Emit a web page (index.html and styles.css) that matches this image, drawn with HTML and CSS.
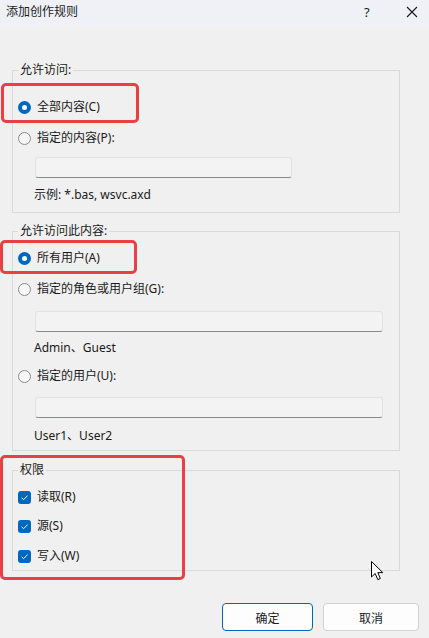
FILE: index.html
```html
<!DOCTYPE html>
<html lang="zh-CN">
<head>
<meta charset="utf-8">
<title>添加创作规则</title>
<link rel="stylesheet" href="styles.css">
</head>
<body>
<div class="window">
  <div class="titlebar">
    <span class="title">添加创作规则</span>
    <span class="help">?</span>
    <span class="close">
      <svg width="12" height="12" viewBox="0 0 12 12"><path d="M1 1 L11 11 M11 1 L1 11" stroke="#1a1a1a" stroke-width="1.1" fill="none"/></svg>
    </span>
  </div>

  <div class="content">
    <fieldset class="group g1">
      <legend>允许访问:</legend>
      <div class="opt"><span class="radio on"></span><span>全部内容(C)</span></div>
      <div class="opt gap7"><span class="radio"></span><span>指定的内容(P):</span></div>
      <div class="field short mt7"></div>
      <div class="hint mt9">示例: *.bas, wsvc.axd</div>
    </fieldset>

    <fieldset class="group g2">
      <legend>允许访问此内容:</legend>
      <div class="opt"><span class="radio on"></span><span>所有用户(A)</span></div>
      <div class="opt gap7"><span class="radio"></span><span>指定的角色或用户组(G):</span></div>
      <div class="field long mt10"></div>
      <div class="hint mt8">Admin、Guest</div>
      <div class="opt mt8"><span class="radio"></span><span>指定的用户(U):</span></div>
      <div class="field long mt9"></div>
      <div class="hint mt10">User1、User2</div>
    </fieldset>

    <fieldset class="group g3">
      <legend>权限</legend>
      <div class="opt"><span class="check"><svg width="13" height="13" viewBox="0 0 13 13"><path d="M3.6 6.8 L5.6 8.7 L9.6 4.6" stroke="#ffffff" stroke-width="1" fill="none"/></svg></span><span>读取(R)</span></div>
      <div class="opt mt5"><span class="check"><svg width="13" height="13" viewBox="0 0 13 13"><path d="M3.6 6.8 L5.6 8.7 L9.6 4.6" stroke="#ffffff" stroke-width="1" fill="none"/></svg></span><span>源(S)</span></div>
      <div class="opt mt6"><span class="check"><svg width="13" height="13" viewBox="0 0 13 13"><path d="M3.6 6.8 L5.6 8.7 L9.6 4.6" stroke="#ffffff" stroke-width="1" fill="none"/></svg></span><span>写入(W)</span></div>
    </fieldset>
  </div>

  <div class="buttons">
    <button class="btn primary">确定</button>
    <button class="btn cancel">取消</button>
  </div>

  <div class="mark m1"></div>
  <div class="mark m2"></div>
  <div class="mark m3"></div>

  <svg class="cursor" width="14" height="21" viewBox="0 0 14 21">
    <path d="M0.5 0.5 L0.5 16 L4.2 12.5 L6.8 18.6 L9.3 17.5 L6.8 11.6 L11.8 11.6 Z" fill="#ffffff" stroke="#000000" stroke-width="1" stroke-linejoin="miter"/>
  </svg>
</div>
</body>
</html>
```

FILE: styles.css
```css
* { box-sizing: border-box; }

html, body {
  margin: 0;
  padding: 0;
  background: #f0f0f0;
}

body {
  font-family: "Noto Sans", "Noto Sans CJK SC", sans-serif;
  font-size: 12px;
  line-height: 16px;
  color: #1a1a1a;
}

.window {
  position: relative;
  width: 429px;
  height: 638px;
  background: #f0f0f0;
  overflow: hidden;
}

.titlebar {
  height: 26px;
  background: #eff1f6;
  display: flex;
  align-items: center;
  padding-left: 6px;
}

.title {
  flex: 1;
  font-size: 12px;
  margin-top: -2px;
}

.help {
  width: 10px;
  font-size: 13px;
  margin-right: 32px;
  margin-top: -2px;
}

.close {
  display: flex;
  width: 12px;
  height: 12px;
  margin-right: 11px;
  margin-top: -2px;
}

.content {
  padding: 0 29px 0 12px;
}

.group {
  margin: 0;
  padding: 0;
  border: 1px solid #dadada;
  min-width: 0;
}

.group legend {
  margin-left: 5px;
  padding: 0 2px;
  line-height: 16px;
  height: 16px;
}

.g1 { margin-top: 36px; padding: 17px 0 9px 0; }
.g2 { margin-top: 10px; padding: 7px 0 6px 0; }
.g3 { margin-top: 11px; padding: 7px 0 2px 0; }

.opt {
  display: flex;
  align-items: center;
  gap: 6px;
  height: 24px;
  margin-left: 5px;
}

.gap7 { margin-top: 7px; }
.mt5 { margin-top: 5px; }
.mt6 { margin-top: 6px; }
.mt7 { margin-top: 7px; }
.mt8 { margin-top: 8px; }
.mt9 { margin-top: 9px; }
.mt10 { margin-top: 10px; }

.radio {
  width: 13px;
  height: 13px;
  border-radius: 50%;
  border: 1px solid #8b8b8b;
  background: #f6f6f6;
  flex: none;
  display: flex;
  align-items: center;
  justify-content: center;
}

.radio.on {
  border: none;
  background: #0067c0;
}

.radio.on::after {
  content: "";
  width: 5px;
  height: 5px;
  border-radius: 50%;
  background: #ffffff;
}

.check {
  width: 13px;
  height: 13px;
  border-radius: 3px;
  background: #0067c0;
  flex: none;
  display: flex;
}

.field {
  margin-left: 22px;
  height: 21px;
  background: #f3f3f3;
  border: 1px solid #e2e2e2;
  border-bottom-color: #8a8a8a;
  border-radius: 3px;
}

.field.short { width: 257px; }
.field.long { width: 348px; }

.hint {
  margin-left: 21px;
  height: 16px;
}

.buttons {
  display: flex;
  justify-content: flex-end;
  gap: 10px;
  padding-right: 10px;
  margin-top: 32px;
}

.btn {
  height: 28px;
  font-family: "Noto Sans CJK SC", sans-serif;
  font-size: 12px;
  color: #1a1a1a;
  background: #fdfdfd;
  border-radius: 4px;
  padding: 0;
}

.btn.primary {
  width: 91px;
  border: 1px solid #0067c0;
}

.btn.cancel {
  width: 96px;
  border: 1px solid #d1d1d1;
}

.mark {
  position: absolute;
  border: 3px solid #e84043;
  border-radius: 5px;
}

.m1 { left: 1px; top: 83px; width: 138px; height: 40px; }
.m2 { left: 0; top: 240px; width: 137px; height: 34px; }
.m3 { left: 0; top: 455px; width: 185px; height: 125px; }

.cursor {
  position: absolute;
  left: 371px;
  top: 561px;
}
```
